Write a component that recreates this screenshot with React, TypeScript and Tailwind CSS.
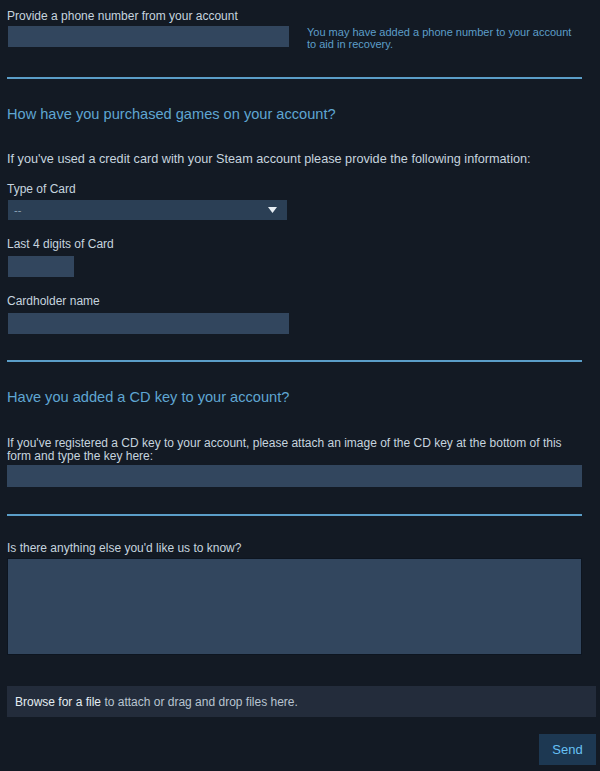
export default function App() {
    return (
        // page
        <div className="min-h-[771px] w-[600px] bg-[#131a24] pl-[7px] pr-[4px] pt-[8px] text-[12px] text-[#c6d4df] [font-family:'Liberation_Sans',Arial,sans-serif]">
            <div className="w-[575px]">
                {/* phone */}
                <div className="flex items-start">
                    <div className="flex w-[282px] flex-col">
                        <p className="h-[18px] leading-[16px]">Provide a phone number from your account</p>
                        <div className="ml-[1px] h-[21px] w-[281px] bg-[#32465e]" />
                    </div>
                    <p className="ml-[18px] mt-[18px] w-[282px] text-[11px] leading-[12px] text-[#5d9ec9]">
                        You may have added a phone number to your account to aid in recovery.
                    </p>
                </div>
                <div className="mt-[27px] h-[2px] bg-[#5b9ec8]" />

                {/* purchases */}
                <h2 className="mt-[26px] text-[14.6px] leading-[18px] text-[#5fa6d2]">How have you purchased games on your account?</h2>
                <p className="mt-[29px] text-[12.7px] leading-[14px]">If you&apos;ve used a credit card with your Steam account please provide the following information:</p>
                <p className="mt-[16px] leading-[14px]">Type of Card</p>
                <div className="ml-[1px] mt-[4px] flex h-[20px] w-[279px] items-center justify-between bg-[#2b3f55] pl-[6px] pr-[10px]">
                    <span className="text-[11px] text-[#8ea4b8]">--</span>
                    <svg width="9" height="6" viewBox="0 0 9 6"><path d="M0 0h9L4.5 6z" fill="#e6edf3" /></svg>
                </div>
                <p className="mt-[17px] leading-[14px]">Last 4 digits of Card</p>
                <div className="ml-[1px] mt-[5px] h-[21px] w-[66px] bg-[#32465e]" />
                <p className="mt-[17px] leading-[14px]">Cardholder name</p>
                <div className="ml-[1px] mt-[5px] h-[21px] w-[281px] bg-[#32465e]" />
                <div className="mt-[26px] h-[2px] bg-[#5b9ec8]" />

                {/* cd key */}
                <h2 className="mt-[26px] text-[14.6px] leading-[18px] text-[#5fa6d2]">Have you added a CD key to your account?</h2>
                <p className="mt-[31px] pr-[6px] leading-[13px]">
                    If you&apos;ve registered a CD key to your account, please attach an image of the CD key at the bottom of this form and type the key here:
                </p>
                <div className="mt-[2px] h-[22px] bg-[#32465e]" />
                <div className="mt-[27px] h-[2px] bg-[#5b9ec8]" />

                {/* notes */}
                <p className="mt-[25px] leading-[14px]">Is there anything else you&apos;d like us to know?</p>
                <div className="mt-[3px] h-[97px] border border-[#0d1520] bg-[#32465e]" />
            </div>

            {/* file drop */}
            <div className="mt-[31px] flex h-[31px] items-center bg-[#232c3b] pl-[8px] text-[#b8c4d0]">
                <span className="text-[#e4ecf2]">Browse for a file</span>
                <span>&nbsp;to attach or drag and drop files here.</span>
            </div>

            <div className="mt-[17px] flex justify-end">
                <button className="h-[31px] w-[57px] bg-[#1d3852] text-[13px] text-[#67c1f5]">Send</button>
            </div>
        </div>
    );
}
